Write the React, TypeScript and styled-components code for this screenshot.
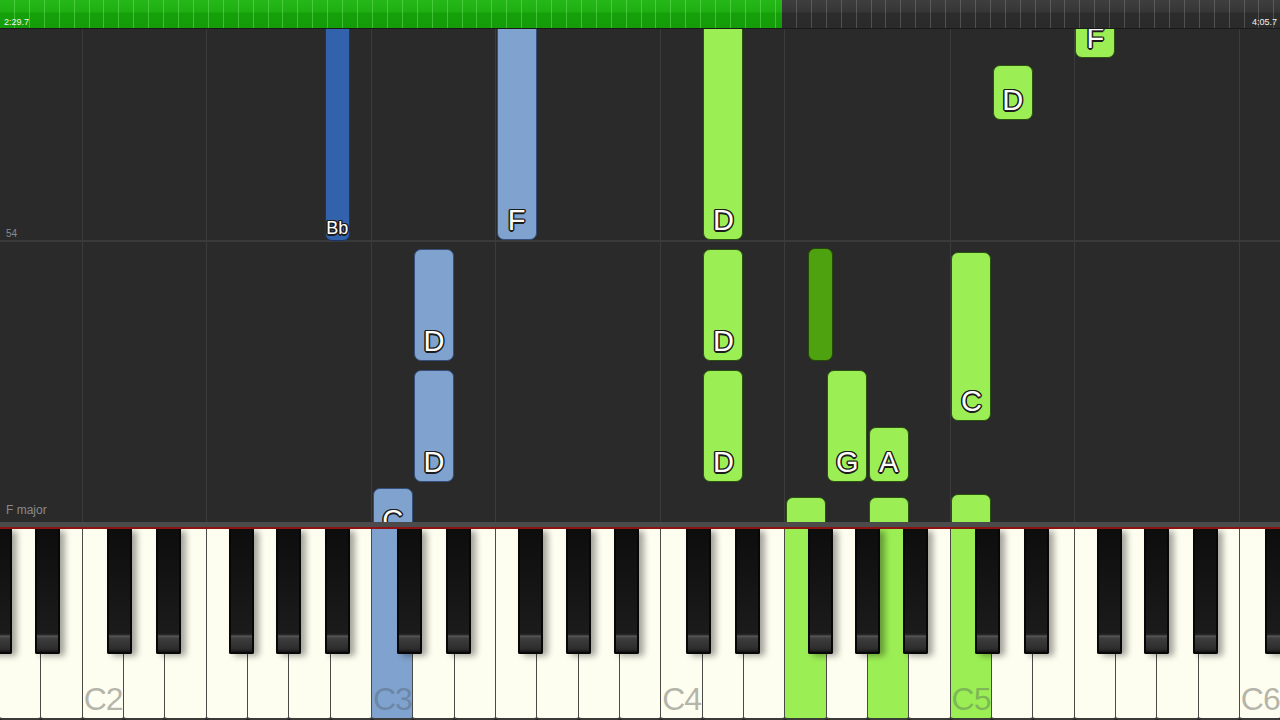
import React from 'react';
import styled, { createGlobalStyle } from 'styled-components';

const GlobalStyle = createGlobalStyle`
  html, body { margin: 0; padding: 0; background: #2a2a2a; overflow: hidden; }
  body { font-family: "Liberation Sans", Arial, sans-serif; }
  * { box-sizing: border-box; }
`;

const W = 289.333 / 7;
const LETTERS = ['C', 'D', 'E', 'F', 'G', 'A', 'B'];
const whiteIndex = (letter: string, octave: number) => (octave - 2) * 7 + LETTERS.indexOf(letter) + 2;
const whiteLeft = (letter: string, octave: number) => whiteIndex(letter, octave) * W;
const BLACK_OFFSET: Record<string, number> = { C: -16.5, D: -9, F: -19, G: -13, A: -6 };
const blackLeft = (letter: string, octave: number) => {
  const idx = whiteIndex(letter, octave) + 1;
  return idx * W + BLACK_OFFSET[letter];
};

const PALETTE = {
  lg: { fill: '#9cee55', edge: '#2c5212' },
  dg: { fill: '#4fa20f', edge: '#244a06' },
  lb: { fill: '#7fa3ce', edge: '#34507a' },
  db: { fill: '#3262ab', edge: '#18346a' },
};
type Tone = keyof typeof PALETTE;

const Page = styled.div`
  width: 1280px;
  height: 720px;
  display: flex;
  flex-direction: column;
  background: #2a2a2a;
  overflow: hidden;
`;

const TopBar = styled.div`
  position: relative;
  height: 29px;
  flex: 0 0 29px;
  display: flex;
  border-bottom: 1px solid #1a1a1a;
`;

const Segment = styled.div<{ $played?: boolean }>`
  height: 100%;
  flex: ${(p) => (p.$played ? '0 0 782px' : '1 1 auto')};
  background:
    repeating-linear-gradient(
      to right,
      transparent 0,
      transparent 13.92px,
      ${(p) => (p.$played ? 'rgba(120,230,110,0.45)' : 'rgba(150,150,150,0.35)')} 13.92px,
      ${(p) => (p.$played ? 'rgba(120,230,110,0.45)' : 'rgba(150,150,150,0.35)')} 14.92px
    ),
    ${(p) =>
      p.$played
        ? 'linear-gradient(to bottom, #25b818 0, #1fae12 12px, #15a00a 13px, #149c08 100%)'
        : 'linear-gradient(to bottom, #3e3e3e 0, #363636 12px, #2c2c2c 13px, #2a2a2a 100%)'};
`;

const TimeLabel = styled.span<{ $right?: boolean }>`
  position: absolute;
  top: 17px;
  ${(p) => (p.$right ? 'right: 3px;' : 'left: 4px;')}
  font-size: 9px;
  line-height: 10px;
  color: #f2f2f2;
  font-family: "Liberation Sans", Arial, sans-serif;
`;

const Roll = styled.div`
  position: relative;
  flex: 1 1 auto;
  overflow: hidden;
  background:
    linear-gradient(to bottom, transparent 211px, #3a3a3a 211px, #3a3a3a 213px, transparent 213px),
    #2a2a2a;
`;

const GridRow = styled.div`
  display: flex;
  height: 100%;
`;

const GridCol = styled.div<{ $keys: number }>`
  flex: 0 0 ${(p) => p.$keys * W}px;
  height: 100%;
  border-right: 1px solid #3b3b3b;
`;

const RollText = styled.span<{ $size: number }>`
  position: absolute;
  left: 6px;
  font-size: ${(p) => p.$size}px;
  line-height: 1;
  color: #8a8a8a;
`;

const NoteBar = styled.div<{ $tone: Tone }>`
  position: absolute;
  border-radius: 7px;
  background: ${(p) => PALETTE[p.$tone].fill};
  border: 1px solid ${(p) => PALETTE[p.$tone].edge};
`;

const NoteLabel = styled.span<{ $small?: boolean }>`
  position: absolute;
  left: 0;
  right: 0;
  bottom: ${(p) => (p.$small ? 3 : 4)}px;
  text-align: center;
  font-family: "Liberation Sans", Arial, sans-serif;
  font-size: ${(p) => (p.$small ? 18 : 29)}px;
  line-height: 1;
  color: #ffffff;
  text-shadow:
    1.5px 0 0 #1c1c1c, -1.5px 0 0 #1c1c1c, 0 1.5px 0 #1c1c1c, 0 -1.5px 0 #1c1c1c,
    1px 1px 0 #1c1c1c, -1px -1px 0 #1c1c1c, 1px -1px 0 #1c1c1c, -1px 1px 0 #1c1c1c;
`;

const Band = styled.div`
  flex: 0 0 5px;
  background: #4b4b4b;
`;

const RedLine = styled.div`
  flex: 0 0 2px;
  background: #8e1212;
`;

const Keyboard = styled.div`
  position: relative;
  flex: 0 0 191px;
  display: flex;
  overflow: hidden;
  background: #222;
`;

const WhiteKey = styled.div<{ $fill?: string }>`
  position: relative;
  flex: 0 0 ${W}px;
  height: 100%;
  background: ${(p) => p.$fill || '#fdfdf0'};
  border-right: 1px solid #4a4a46;
  border-bottom: 2px solid #3a3a38;
  border-radius: 0 0 3px 3px;
`;

const KeyName = styled.span<{ $onColor?: boolean }>`
  position: absolute;
  left: 1px;
  bottom: 3px;
  font-family: "Liberation Sans", Arial, sans-serif;
  font-size: 32px;
  line-height: 1;
  letter-spacing: -1px;
  color: ${(p) => (p.$onColor ? 'rgba(70,80,90,0.35)' : 'rgba(90,90,80,0.45)')};
`;

const BlackKey = styled.div`
  position: absolute;
  top: 0;
  width: 25px;
  height: 125px;
  border: 2px solid #070707;
  border-top: none;
  border-radius: 0 0 2px 2px;
  background: linear-gradient(
    to bottom,
    #0d0d0d 0px,
    #1b1b1b 104px,
    #2a2a2a 106px,
    #5a5a5a 107px,
    #3e3e3e 109px,
    #2c2c2c 120px,
    #151515 123px
  );
  box-shadow: 5px 2px 6px rgba(0, 0, 0, 0.35);
`;

type NoteSpec = {
  letter: string;
  octave: number;
  sharp?: boolean;
  top: number;
  height: number;
  tone: Tone;
  label?: string;
};

const NOTES: NoteSpec[] = [
  { letter: 'A', octave: 2, sharp: true, top: -20, height: 232, tone: 'db', label: 'Bb' },
  { letter: 'F', octave: 3, top: -20, height: 231, tone: 'lb', label: 'F' },
  { letter: 'D', octave: 4, top: -20, height: 231, tone: 'lg', label: 'D' },
  { letter: 'D', octave: 3, top: 220, height: 112, tone: 'lb', label: 'D' },
  { letter: 'D', octave: 3, top: 341, height: 112, tone: 'lb', label: 'D' },
  { letter: 'C', octave: 3, top: 459, height: 52, tone: 'lb', label: 'C' },
  { letter: 'D', octave: 4, top: 220, height: 112, tone: 'lg', label: 'D' },
  { letter: 'D', octave: 4, top: 341, height: 112, tone: 'lg', label: 'D' },
  { letter: 'F', octave: 4, sharp: true, top: 219, height: 113, tone: 'dg' },
  { letter: 'G', octave: 4, top: 341, height: 112, tone: 'lg', label: 'G' },
  { letter: 'A', octave: 4, top: 398, height: 55, tone: 'lg', label: 'A' },
  { letter: 'C', octave: 5, top: 223, height: 169, tone: 'lg', label: 'C' },
  { letter: 'D', octave: 5, top: 36, height: 55, tone: 'lg', label: 'D' },
  { letter: 'F', octave: 5, top: -30, height: 59, tone: 'lg', label: 'F' },
  { letter: 'F', octave: 4, top: 468, height: 100, tone: 'lg' },
  { letter: 'A', octave: 4, top: 468, height: 100, tone: 'lg' },
  { letter: 'C', octave: 5, top: 465, height: 100, tone: 'lg' },
];

const WHITE_KEYS: { letter: string; octave: number }[] = [
  { letter: 'A', octave: 1 },
  { letter: 'B', octave: 1 },
];
for (let o = 2; o <= 5; o++) LETTERS.forEach((l) => WHITE_KEYS.push({ letter: l, octave: o }));
WHITE_KEYS.push({ letter: 'C', octave: 6 });

const PRESSED: Record<string, Tone> = { C3: 'lb', F4: 'lg', A4: 'lg', C5: 'lg' };

const BLACK_KEYS: number[] = [];
BLACK_KEYS.push(0 - 13);
BLACK_KEYS.push(blackLeft('A', 1));
for (let o = 2; o <= 5; o++) {
  ['C', 'D', 'F', 'G', 'A'].forEach((l) => BLACK_KEYS.push(blackLeft(l, o)));
}
BLACK_KEYS.push(blackLeft('C', 6));

const GRID = [2, 3, 4, 3, 4, 3, 4, 3, 4, 3, 4];

export default function App() {
  return (
    <Page>
      <GlobalStyle />
      <TopBar>
        <Segment $played />
        <Segment />
        <TimeLabel>2:29.7</TimeLabel>
        <TimeLabel $right>4:05.7</TimeLabel>
      </TopBar>
      <Roll>
        <GridRow>
          {GRID.map((k, i) => (
            <GridCol key={i} $keys={k} />
          ))}
        </GridRow>
        <RollText $size={10} style={{ top: 200 }}>54</RollText>
        <RollText $size={12} style={{ top: 475 }}>F major</RollText>
        {NOTES.map((n, i) => {
          const left = n.sharp ? blackLeft(n.letter, n.octave) : whiteLeft(n.letter, n.octave) + 0.7;
          const width = n.sharp ? 25 : 40;
          return (
            <NoteBar key={i} $tone={n.tone} style={{ left, top: n.top, width, height: n.height }}>
              {n.label && <NoteLabel $small={n.sharp}>{n.label}</NoteLabel>}
            </NoteBar>
          );
        })}
      </Roll>
      <Band />
      <RedLine />
      <Keyboard>
        {WHITE_KEYS.map((k, i) => {
          const id = `${k.letter}${k.octave}`;
          const tone = PRESSED[id];
          return (
            <WhiteKey key={i} $fill={tone ? PALETTE[tone].fill : undefined}>
              {k.letter === 'C' && <KeyName $onColor={!!tone}>{id}</KeyName>}
            </WhiteKey>
          );
        })}
        {BLACK_KEYS.map((x, i) => (
          <BlackKey key={i} style={{ left: x }} />
        ))}
      </Keyboard>
    </Page>
  );
}
